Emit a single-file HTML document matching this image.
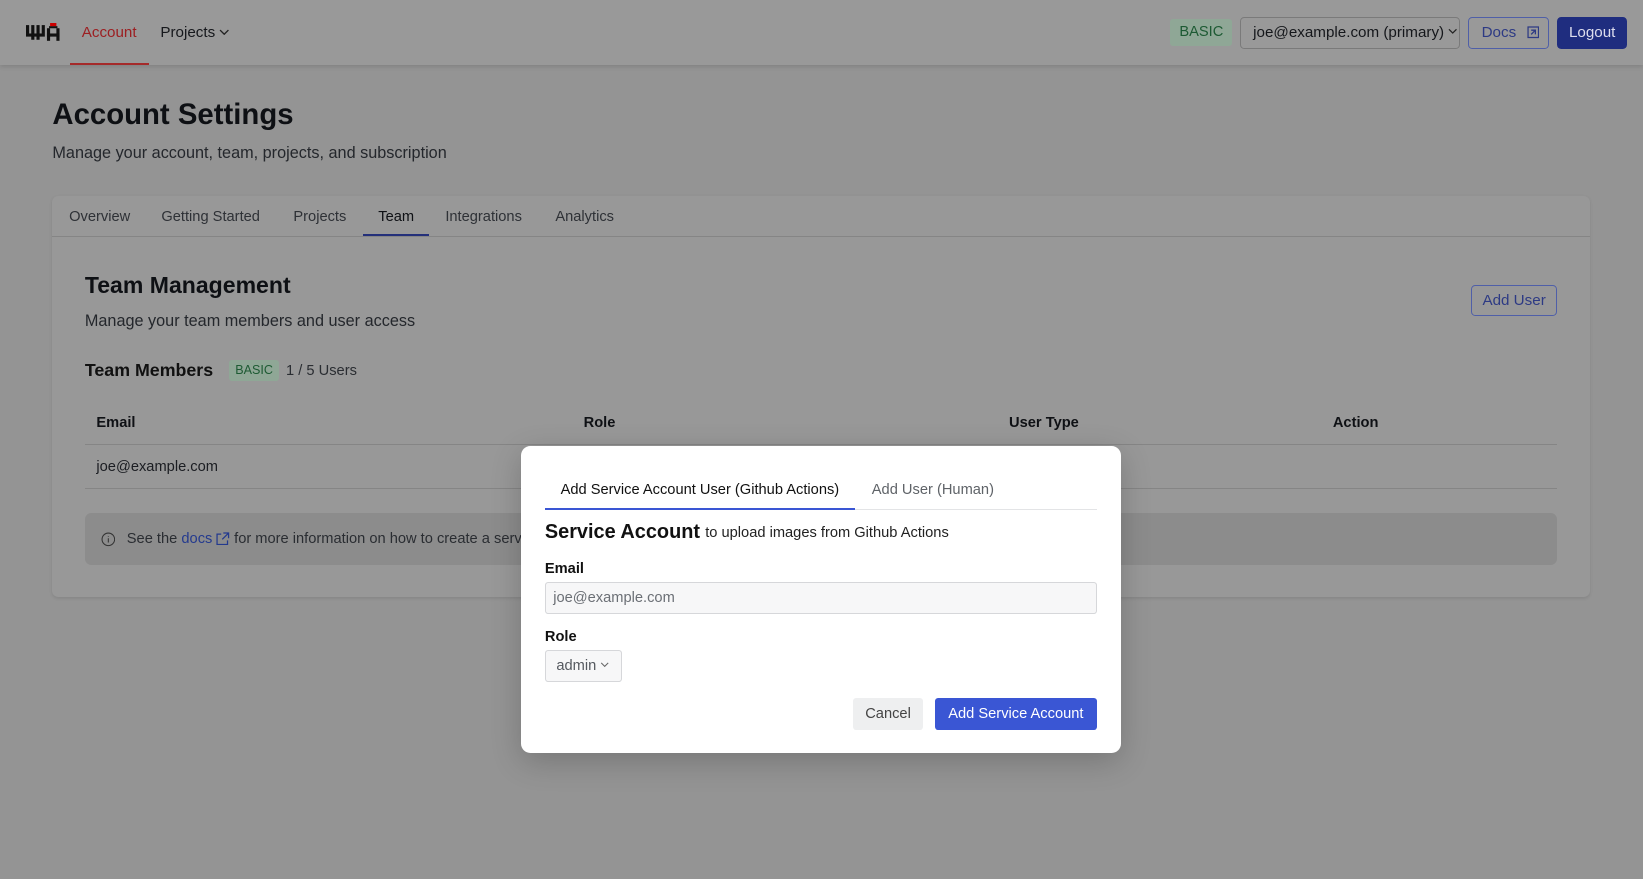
<!DOCTYPE html>
<html><head><meta charset="utf-8"><style>
html{zoom:1.04783}
*{box-sizing:border-box;margin:0;padding:0}
body{width:1568px;height:839px;background:#949494;font-family:"Liberation Sans",sans-serif;color:#0f1115;position:relative;overflow:hidden}
.a{position:absolute;white-space:nowrap}
.hdr{left:0;top:0;width:1568px;height:62px;background:#999;box-shadow:0 2px 4px rgba(0,0,0,.12)}
.card{left:50px;top:187px;width:1467px;height:383px;background:#989898;border-radius:6px;box-shadow:0 1px 3px rgba(0,0,0,.1)}
.btnb{border:1px solid #4f5fa8;border-radius:4px;color:#2d3a84}
.modal{left:497px;top:426px;width:573px;height:293px;background:#fff;border-radius:9px;box-shadow:0 8px 30px rgba(0,0,0,.2)}
.chev{display:inline-block;vertical-align:2px;margin-left:4px}
</style></head><body>
<div class="a hdr"></div>
<svg class="a" style="left:25px;top:22px" width="33" height="18" viewBox="0 0 33 18"><g fill="#111"><rect x="0" y="2" width="3" height="8"/><rect x="5" y="2" width="3" height="14"/><rect x="10" y="2" width="3" height="14"/><rect x="15" y="2" width="3" height="8"/><rect x="0" y="10" width="18" height="3"/><rect x="20" y="5" width="3" height="12"/><rect x="29" y="5" width="3" height="12"/><rect x="20" y="10" width="12" height="3"/><rect x="22" y="3" width="8" height="2"/></g><rect x="23" y="0" width="6" height="3" fill="#c00"/></svg>
<div class="a" style="left:78px;top:23px;font-size:14.5px;color:#9c1f22">Account</div>
<div class="a" style="left:67px;top:60px;width:75px;height:2px;background:#a52a2a"></div>
<div class="a" style="left:153px;top:23px;font-size:14.5px;color:#16181c">Projects<svg class="chev" width="10" height="6" viewBox="0 0 10 6" fill="none" stroke="#222" stroke-width="1.3"><path d="M1 1L5 5L9 1"/></svg></div>
<div class="a" style="left:1117px;top:18px;width:59px;height:26px;background:#8fa796;border-radius:3px;color:#1d5a33;font-size:14px;text-align:center;line-height:26px">BASIC</div>
<div class="a" style="left:1183px;top:16px;width:210px;height:31px;border:1px solid #7a7a7a;border-radius:4px;font-size:14.5px;line-height:29px;padding-left:12px;color:#15171b">joe@example.com (primary)<svg class="chev" width="9" height="6" viewBox="0 0 10 6" fill="none" stroke="#222" stroke-width="1.3"><path d="M1 1L5 5L9 1"/></svg></div>
<div class="a btnb" style="left:1401px;top:16px;width:77px;height:31px;font-size:14.5px;line-height:29px;padding-left:12px">Docs <svg style="vertical-align:-2px;margin-left:6px" width="12" height="12" viewBox="0 0 12 12" fill="none" stroke="#2d3a84" stroke-width="1.2"><path d="M1 1H11V11H1Z M4 4H8V8 M8 4L4 8"/></svg></div>
<div class="a" style="left:1486px;top:16px;width:67px;height:31px;background:#1f2d7f;border-radius:4px;color:#dde;font-size:14.5px;line-height:31px;text-align:center">Logout</div>

<div class="a" style="left:50px;top:94px;font-size:28px;font-weight:bold;color:#0e1014">Account Settings</div>
<div class="a" style="left:50px;top:137px;font-size:15.5px;color:#24272c">Manage your account, team, projects, and subscription</div>

<div class="a card"></div>
<div class="a" style="left:50px;top:225px;width:1467px;height:1px;background:#858585"></div>
<div class="a" style="left:66px;top:199px;font-size:14px;color:#2e3136">Overview</div>
<div class="a" style="left:154px;top:199px;font-size:14px;color:#2e3136">Getting Started</div>
<div class="a" style="left:280px;top:199px;font-size:14px;color:#2e3136">Projects</div>
<div class="a" style="left:361px;top:199px;font-size:14px;color:#0e1014">Team</div>
<div class="a" style="left:346px;top:223px;width:63px;height:2px;background:#24307a"></div>
<div class="a" style="left:425px;top:199px;font-size:14px;color:#2e3136">Integrations</div>
<div class="a" style="left:530px;top:199px;font-size:14px;color:#2e3136">Analytics</div>

<div class="a" style="left:81px;top:260px;font-size:22px;font-weight:bold;color:#0e1014">Team Management</div>
<div class="a" style="left:81px;top:298px;font-size:15.5px;color:#24272c">Manage your team members and user access</div>
<div class="a btnb" style="left:1404px;top:272px;width:82px;height:30px;font-size:14.5px;line-height:28px;text-align:center">Add User</div>
<div class="a" style="left:81px;top:344px;font-size:17px;font-weight:bold;color:#111">Team Members</div>
<div class="a" style="left:219px;top:344px;width:47px;height:20px;background:#8fa796;border-radius:3px;color:#1d5a33;font-size:12px;text-align:center;line-height:20px">BASIC</div>
<div class="a" style="left:273px;top:346px;font-size:14px;color:#2a2d32">1 / 5 Users</div>
<div class="a" style="left:92px;top:396px;font-size:14px;font-weight:bold">Email</div>
<div class="a" style="left:557px;top:396px;font-size:14px;font-weight:bold">Role</div>
<div class="a" style="left:963px;top:396px;font-size:14px;font-weight:bold">User Type</div>
<div class="a" style="left:1272px;top:396px;font-size:14px;font-weight:bold">Action</div>
<div class="a" style="left:81px;top:424px;width:1405px;height:1px;background:#858585"></div>
<div class="a" style="left:92px;top:438px;font-size:14px;color:#1b1d22">joe@example.com</div>
<div class="a" style="left:81px;top:466px;width:1405px;height:1px;background:#858585"></div>
<div class="a" style="left:81px;top:490px;width:1405px;height:49px;background:#8c8c8c;border-radius:6px"></div>
<svg class="a" style="left:96px;top:508px" width="14" height="14" viewBox="0 0 14 14" fill="none" stroke="#333" stroke-width="1"><circle cx="7" cy="7" r="6"/><path d="M7 6V10M7 4V4.6"/></svg>
<div class="a" style="left:121px;top:507px;font-size:14px;color:#2a2d32">See the <span style="color:#243a8e">docs</span> <svg style="vertical-align:-2px" width="13" height="13" viewBox="0 0 13 13" fill="none" stroke="#243a8e" stroke-width="1.2"><path d="M5 2H1V12H11V8M7 1H12V6M12 1L6 7"/></svg> for more information on how to create a serv</div>

<div class="a modal"></div>
<div class="a" style="left:535px;top:460px;font-size:14px;color:#111">Add Service Account User (Github Actions)</div>
<div class="a" style="left:832px;top:460px;font-size:14px;color:#5f6368">Add User (Human)</div>
<div class="a" style="left:520px;top:486px;width:527px;height:1px;background:#e3e4e6"></div>
<div class="a" style="left:520px;top:485px;width:296px;height:2px;background:#3a56d4"></div>
<div class="a" style="left:520px;top:497px;font-size:19px;font-weight:bold;color:#111">Service Account</div>
<div class="a" style="left:673px;top:501px;font-size:14px;color:#222">to upload images from Github Actions</div>
<div class="a" style="left:520px;top:535px;font-size:14px;font-weight:bold;color:#111">Email</div>
<div class="a" style="left:520px;top:555px;width:527px;height:31px;background:#f7f7f8;border:1px solid #d6d7da;border-radius:3px;font-size:14px;color:#6b6f75;line-height:30px;padding-left:7px">joe@example.com</div>
<div class="a" style="left:520px;top:600px;font-size:14px;font-weight:bold;color:#111">Role</div>
<div class="a" style="left:520px;top:620px;width:74px;height:31px;background:#f7f7f8;border:1px solid #d6d7da;border-radius:3px;font-size:14px;color:#55595f;line-height:30px;padding-left:10px">admin<svg class="chev" width="9" height="5" viewBox="0 0 10 6" fill="none" stroke="#666" stroke-width="1.2"><path d="M1 1L5 5L9 1"/></svg></div>
<div class="a" style="left:814px;top:666px;width:67px;height:31px;background:#eeeff0;border-radius:3px;font-size:14px;color:#444;line-height:32px;text-align:center">Cancel</div>
<div class="a" style="left:892px;top:666px;width:155px;height:31px;background:#3a56d4;border-radius:3px;font-size:14px;color:#fff;line-height:32px;text-align:center">Add Service Account</div>
</body></html>
